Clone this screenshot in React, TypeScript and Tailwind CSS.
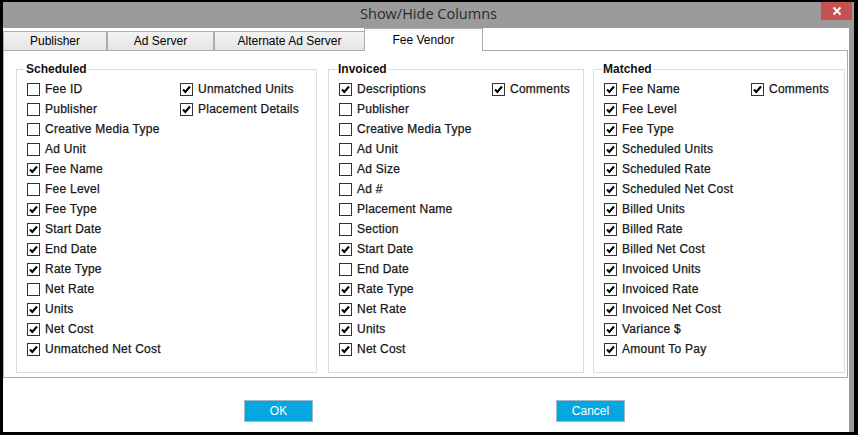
import React from 'react';

type Item = [string, boolean];

interface Group {
  title: string;
  box: string;
  colWidth: string;
  main: Item[];
  side: Item[];
}

const GROUPS: Group[] = [
  {
    title: 'Scheduled',
    box: 'w-[301px] mr-[11px]',
    colWidth: 'w-[153px]',
    main: [
      ['Fee ID', false],
      ['Publisher', false],
      ['Creative Media Type', false],
      ['Ad Unit', false],
      ['Fee Name', true],
      ['Fee Level', false],
      ['Fee Type', true],
      ['Start Date', true],
      ['End Date', true],
      ['Rate Type', true],
      ['Net Rate', false],
      ['Units', true],
      ['Net Cost', true],
      ['Unmatched Net Cost', true],
    ],
    side: [
      ['Unmatched Units', true],
      ['Placement Details', true],
    ],
  },
  {
    title: 'Invoiced',
    box: 'w-[256px] mr-[9px]',
    colWidth: 'w-[153px]',
    main: [
      ['Descriptions', true],
      ['Publisher', false],
      ['Creative Media Type', false],
      ['Ad Unit', false],
      ['Ad Size', false],
      ['Ad #', false],
      ['Placement Name', false],
      ['Section', false],
      ['Start Date', true],
      ['End Date', false],
      ['Rate Type', true],
      ['Net Rate', true],
      ['Units', true],
      ['Net Cost', true],
    ],
    side: [['Comments', true]],
  },
  {
    title: 'Matched',
    box: 'w-[252px]',
    colWidth: 'w-[147px]',
    main: [
      ['Fee Name', true],
      ['Fee Level', true],
      ['Fee Type', true],
      ['Scheduled Units', true],
      ['Scheduled Rate', true],
      ['Scheduled Net Cost', true],
      ['Billed Units', true],
      ['Billed Rate', true],
      ['Billed Net Cost', true],
      ['Invoiced Units', true],
      ['Invoiced Rate', true],
      ['Invoiced Net Cost', true],
      ['Variance $', true],
      ['Amount To Pay', true],
    ],
    side: [['Comments', true]],
  },
];

const TABS = [
  { label: 'Publisher', w: 'w-[104px]' },
  { label: 'Ad Server', w: 'w-[107px]' },
  { label: 'Alternate Ad Server', w: 'w-[151px]' },
];

const Check: React.FC<{ label: string; checked: boolean }> = ({ label, checked }) => (
  <div className="h-5 flex items-center">
    <div className="w-[13px] h-[13px] border border-[#333333] bg-white flex items-center justify-center shrink-0">
      {checked && (
        <svg width="11" height="11" viewBox="0 0 11 11">
          <path d="M2 5.5 L4.3 8 L9 2.5" stroke="#000" strokeWidth="2.1" fill="none" />
        </svg>
      )}
    </div>
    <span className="ml-[5px] text-[12px] tracking-[0.25px] text-[#111] [-webkit-text-stroke:0.25px_#222] whitespace-nowrap">
      {label}
    </span>
  </div>
);

export default function App() {
  return (
    <div className="w-[858px] h-[435px] bg-black pt-[2px] pl-[3px] pr-[4px] pb-[3px] font-['Liberation_Sans',Arial,sans-serif]">
      <div className="h-full flex flex-col bg-[#9b9b9b]">
        {/* Title bar */}
        <div className="h-[26px] relative flex items-center justify-center">
          <span className="text-[14.5px] text-[#2a2a2a] font-['Open_Sans',sans-serif] -mt-[3px]">Show/Hide Columns</span>
          <div className="absolute right-[2px] top-0 w-[31px] h-[18px] bg-[#c75050] flex items-center justify-center">
            <svg width="10" height="10" viewBox="0 0 10 10">
              <path d="M1.5 1.5 L8.5 8.5 M8.5 1.5 L1.5 8.5" stroke="white" strokeWidth="2" />
            </svg>
          </div>
        </div>

        {/* Client area */}
        <div className="flex-1 mr-[5px] bg-white flex flex-col">
          {/* Tabs */}
          <div className="h-[22px] flex items-end relative z-10">
            {TABS.map((t) => (
              <div
                key={t.label}
                className={`${t.w} h-[19px] border border-b-0 border-[#acacac] bg-gradient-to-b from-[#f3f3f3] to-[#e5e5e5] flex items-center justify-center text-[12px] text-black`}
              >
                {t.label}
              </div>
            ))}
            <div className="w-[119px] h-[23px] -mb-[1px] -ml-[1px] border border-b-0 border-[#acacac] bg-white flex items-center justify-center text-[12px] text-black">
              Fee Vendor
            </div>
          </div>

          {/* Tab panel */}
          <div className="h-[328px] mr-[1px] border border-[#acacac] bg-white flex pl-[12px] pt-[11px]">
            {GROUPS.map((g) => (
              <fieldset key={g.title} className={`${g.box} h-[311px] border border-[#dcdcdc] pl-[10px] pt-[3px]`}>
                <legend className="-ml-[2px] px-[1px] text-[12px] font-bold text-[#111] leading-[14px]">{g.title}</legend>
                <div className="flex">
                  <div className={`${g.colWidth} flex flex-col`}>
                    {g.main.map(([l, c]) => (
                      <Check key={l} label={l} checked={c} />
                    ))}
                  </div>
                  <div className="flex flex-col">
                    {g.side.map(([l, c]) => (
                      <Check key={l} label={l} checked={c} />
                    ))}
                  </div>
                </div>
              </fieldset>
            ))}
          </div>

          {/* Buttons */}
          <div className="flex-1 flex items-start pt-[22px] pl-[241px] gap-[243px]">
            <button className="w-[69px] h-[22px] bg-[#06a6e1] border border-[#9fb9c6] text-white text-[12px]">OK</button>
            <button className="w-[69px] h-[22px] bg-[#06a6e1] border border-[#9fb9c6] text-white text-[12px]">Cancel</button>
          </div>
        </div>
      </div>
    </div>
  );
}
